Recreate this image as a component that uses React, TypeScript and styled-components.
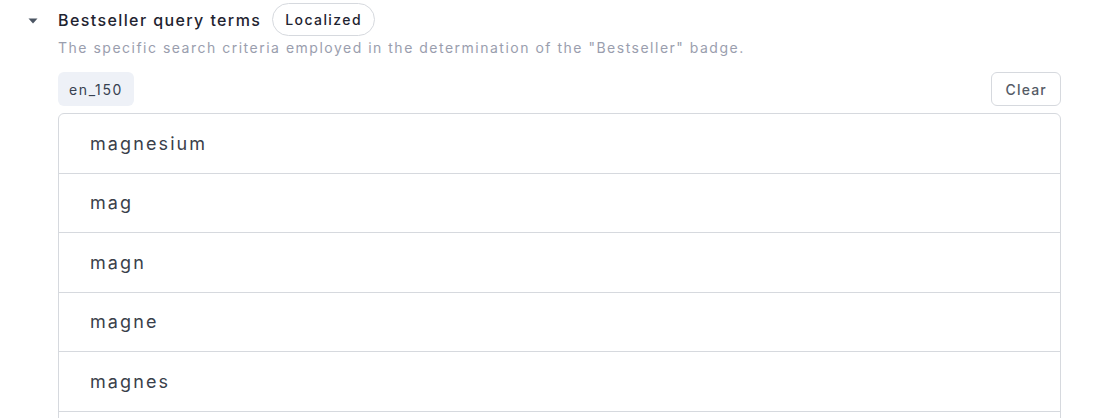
import React from "react";
import styled, { createGlobalStyle } from "styled-components";

const GlobalStyle = createGlobalStyle`
  html, body {
    margin: 0;
    padding: 0;
    background: #ffffff;
    font-family: Inter, "Noto Sans", sans-serif;
    color: #1f2937;
  }
`;

const terms = ["magnesium", "mag", "magn", "magne", "magnes", "magnesi"];

export default function App() {
  return (
    <>
      <GlobalStyle />
      <Section>
        <Header>
          <Caret aria-hidden>
            <svg width="10" height="6" viewBox="0 0 10 6">
              <path d="M0.5 0.5 L9.5 0.5 L5 5.5 Z" fill="#4b5563" />
            </svg>
          </Caret>
          <Title>Bestseller query terms</Title>
          <Badge>Localized</Badge>
        </Header>
        <Body>
          <Description>
            The specific search criteria employed in the determination of the
            "Bestseller" badge.
          </Description>
          <Toolbar>
            <LocaleTag>en_150</LocaleTag>
            <ClearButton type="button">Clear</ClearButton>
          </Toolbar>
          <TermList>
            {terms.map((t) => (
              <TermRow key={t}>{t}</TermRow>
            ))}
          </TermList>
        </Body>
      </Section>
    </>
  );
}

const Section = styled.section`
  padding: 3px 39px 0 28px;
  height: 418px;
  overflow: hidden;
  box-sizing: border-box;
`;

const Header = styled.div`
  display: flex;
  align-items: center;
  height: 33px;
`;

const Caret = styled.span`
  display: flex;
  width: 10px;
  margin-right: 20px;
  margin-top: 2px;
`;

const Title = styled.h3`
  margin: 0;
  font-size: 16px;
  font-weight: 500;
  letter-spacing: 1.4px;
  color: #1f2430;
`;

const Badge = styled.span`
  margin-left: 11px;
  height: 33px;
  box-sizing: border-box;
  padding: 0 12px;
  display: inline-flex;
  align-items: center;
  border: 1px solid #d6d9de;
  border-radius: 17px;
  font-size: 14px;
  font-weight: 500;
  letter-spacing: 1.4px;
  color: #1f2430;
`;

const Body = styled.div`
  padding-left: 30px;
`;

const Description = styled.p`
  margin: 2px 0 0;
  font-size: 14px;
  line-height: 20px;
  letter-spacing: 1.5px;
  color: #9a9eae;
`;

const Toolbar = styled.div`
  display: flex;
  justify-content: space-between;
  align-items: center;
  margin-top: 14px;
`;

const LocaleTag = styled.span`
  height: 34px;
  box-sizing: border-box;
  padding: 0 11px;
  display: inline-flex;
  align-items: center;
  background: #eef1f7;
  border-radius: 6px;
  font-size: 14px;
  letter-spacing: 1.6px;
  color: #374151;
`;

const ClearButton = styled.button`
  height: 34px;
  padding: 0 13px;
  background: #ffffff;
  border: 1px solid #d6d9de;
  border-radius: 6px;
  font-family: inherit;
  font-size: 14px;
  font-weight: 500;
  letter-spacing: 1.2px;
  color: #555b66;
`;

const TermList = styled.ul`
  list-style: none;
  margin: 7px 0 0;
  padding: 0;
  border: 1px solid #d6d9de;
  border-radius: 6px;
`;

const TermRow = styled.li`
  height: 58.5px;
  display: flex;
  align-items: center;
  padding-left: 31px;
  font-size: 18px;
  letter-spacing: 2.1px;
  color: #3a3f4a;
  & + & {
    border-top: 1px solid #d6d9de;
  }
`;
